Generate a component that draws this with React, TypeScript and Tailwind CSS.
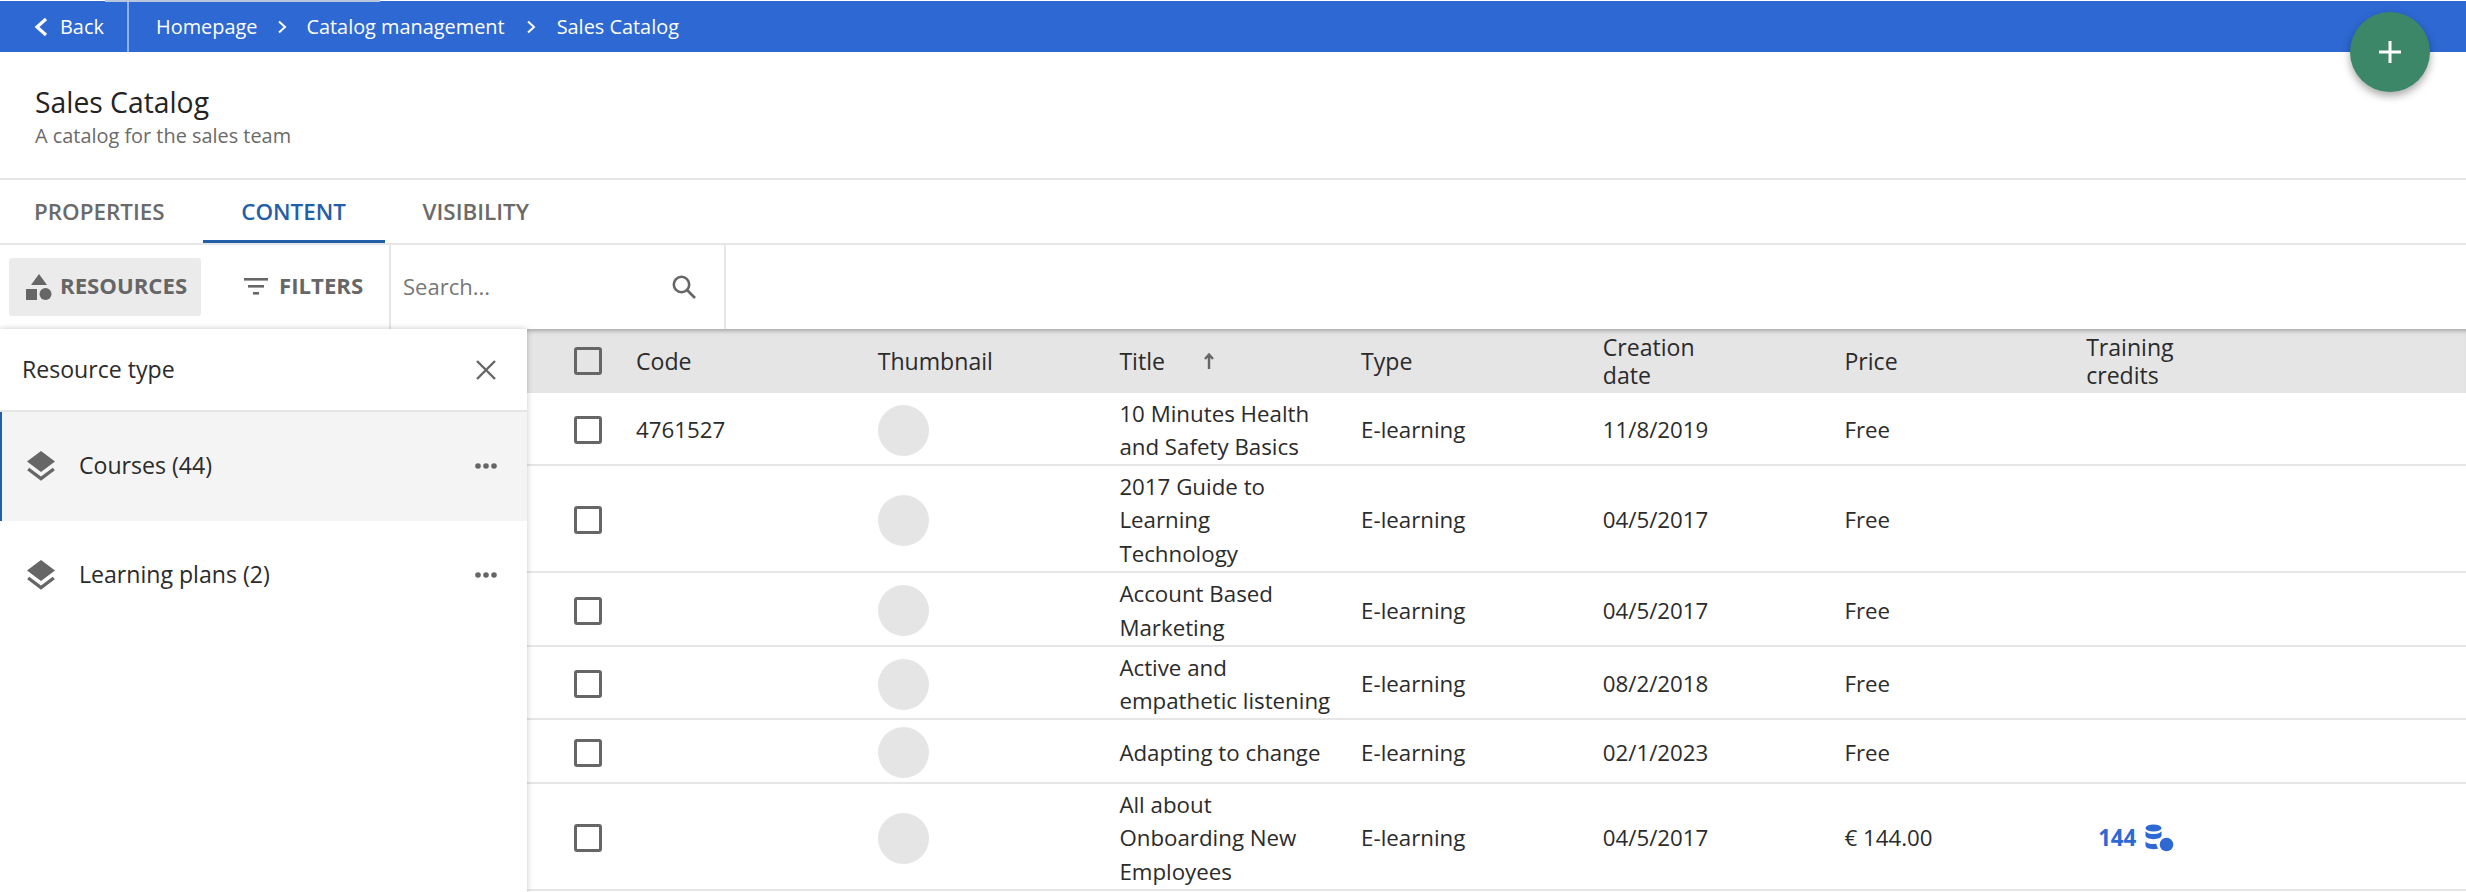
const rows = [
  { h: "h-[73px]", code: "4761527", title: "10 Minutes Health and Safety Basics", date: "11/8/2019", price: "Free" },
  { h: "h-[107px]", code: "", title: "2017 Guide to Learning Technology", date: "04/5/2017", price: "Free" },
  { h: "h-[74px]", code: "", title: "Account Based Marketing", date: "04/5/2017", price: "Free" },
  { h: "h-[73px]", code: "", title: "Active and empathetic listening", date: "08/2/2018", price: "Free" },
  { h: "h-[64px]", code: "", title: "Adapting to change", date: "02/1/2023", price: "Free" },
  { h: "h-[107px]", code: "", title: "All about Onboarding New Employees", date: "04/5/2017", price: "€ 144.00", credits: "144" },
];

const gridCols = "grid grid-cols-[109px_repeat(7,241.7px)_1fr] items-center";

function Checkbox() {
  return (
    <div className="ml-[47px] h-[28px] w-[28px] rounded-[3px] border-[3px] border-[#666666]" />
  );
}

function LayersIcon() {
  return (
    <svg width="28" height="30" viewBox="0 0 28 30" className="shrink-0">
      <path d="M14 0 28 10.5 14 21 0 10.5Z" fill="#666666" />
      <path d="M1.2 18 14 27.6 26.8 18" fill="none" stroke="#666666" strokeWidth="3.4" />
    </svg>
  );
}

function Dots() {
  return (
    <svg width="22" height="6" viewBox="0 0 22 6">
      <circle cx="3" cy="3" r="2.8" fill="#666666" />
      <circle cx="11" cy="3" r="2.8" fill="#666666" />
      <circle cx="19" cy="3" r="2.8" fill="#666666" />
    </svg>
  );
}

function CreditsIcon() {
  return (
    <svg width="29" height="29" viewBox="0 0 29 29" fill="#2d68d3">
      <ellipse cx="8.5" cy="4" rx="8" ry="3.6" />
      <path d="M.5 7.2c1.6 2 4.6 2.8 8 2.8s6.4-.8 8-2.8v4.4c0 2.2-3.6 3.6-8 3.6s-8-1.4-8-3.6Z" />
      <path d="M.5 17.4c1.6 1.8 4.6 2.6 8 2.6 1 0 1.9-.1 2.8-.2.2 1.8.9 3.4 2 4.7-1.4.5-3 .7-4.8.7-4.4 0-8-1.4-8-3.6Z" />
      <circle cx="21.5" cy="20.5" r="6.8" />
    </svg>
  );
}

export default function App() {
  return (
    <div className="relative h-[892px] w-[2466px] overflow-hidden bg-white pt-px font-['Open_Sans',sans-serif] text-[#2b2b2b]">
      {/* Breadcrumb bar */}
      <div className="flex h-[51px] items-center bg-[#2d68d3] text-[19.9px] font-medium text-white">
        <div className="flex h-full w-[129px] items-center border-r-2 border-[#8fb0e8] pl-[34px]">
          <svg width="14" height="20" viewBox="0 0 14 20" fill="none" stroke="white" strokeWidth="3.2" className="mr-[12px]">
            <path d="M12 2 3 10 12 18" />
          </svg>
          Back
        </div>
        <span className="ml-[27px]">Homepage</span>
        <svg width="10" height="14" viewBox="0 0 10 14" fill="none" stroke="white" strokeWidth="2" className="mx-[19.5px]">
          <path d="M2 1.5 8 7 2 12.5" />
        </svg>
        <span>Catalog management</span>
        <svg width="10" height="14" viewBox="0 0 10 14" fill="none" stroke="white" strokeWidth="2" className="mx-[21px]">
          <path d="M2 1.5 8 7 2 12.5" />
        </svg>
        <span>Sales Catalog</span>
      </div>
      <div className="absolute left-[105px] top-0 h-[2px] w-[275px] bg-[#b9c6dc]" />

      {/* Page title */}
      <div className="flex h-[128px] flex-col border-b-2 border-[#e6e6e6] px-[35px] pt-[30px]">
        <div className="text-[28.3px] font-medium leading-[40px] text-[#232323]">Sales Catalog</div>
        <div className="mt-[1px] text-[19.9px] leading-[26px] text-[#6a6a6a]">A catalog for the sales team</div>
      </div>

      {/* Tabs */}
      <div className="flex h-[65px] items-stretch border-b-2 border-[#e6e6e6] text-[22.4px] font-semibold text-[#6a6a6a]">
        <div className="ml-[34px] flex items-center">PROPERTIES</div>
        <div className="ml-[38px] flex w-[182px] items-center justify-center border-b-[3px] border-[#255ea8] pt-[3px] text-[#255ea8]">CONTENT</div>
        <div className="ml-[38px] flex items-center">VISIBILITY</div>
      </div>

      {/* Toolbar */}
      <div className="flex h-[84px] items-stretch">
        <div className="flex w-[389px] items-center pl-[9px] text-[22.2px] font-bold text-[#666666]">
          <div className="flex h-[58px] w-[192px] items-center rounded-[3px] bg-[#ebebeb] pl-[17px]">
            <svg width="26" height="26" viewBox="0 0 26 26" fill="#666666" className="mr-[8px]">
              <path d="M13 0 21 11H5Z" />
              <rect x="0" y="15" width="11" height="11" />
              <circle cx="19.5" cy="20" r="6" />
            </svg>
            <span className="pb-[2px]">RESOURCES</span>
          </div>
          <svg width="24" height="20" viewBox="0 0 24 20" fill="#666666" className="ml-[43px] mr-[11px]">
            <rect x="0" y="1" width="24" height="2.6" />
            <rect x="4" y="8" width="16" height="2.6" />
            <rect x="9" y="15" width="6" height="2.6" />
          </svg>
          <span className="pb-[2px]">FILTERS</span>
        </div>
        <div className="flex w-[337px] items-center justify-between border-x-2 border-[#e6e6e6] pl-[12px] pr-[28px] text-[22px] text-[#777777]">
          <span className="pb-[2px]">Search...</span>
          <svg width="24" height="24" viewBox="0 0 24 24" fill="none" stroke="#666666" strokeWidth="2.6">
            <circle cx="9.5" cy="9.5" r="7.7" />
            <path d="M15 15 23 23" />
          </svg>
        </div>
      </div>

      {/* Content area */}
      <div className="flex items-stretch">
        <div className="z-10 h-[563px] w-[527px] shrink-0 bg-white shadow-[0_0_6px_rgba(0,0,0,0.22)]">
          <div className="flex h-[83px] items-center justify-between border-b-2 border-[#e6e6e6] pl-[22px] pr-[30px] text-[23.1px] font-medium">
            Resource type
            <svg width="22" height="22" viewBox="0 0 22 22" fill="none" stroke="#666666" strokeWidth="2.4">
              <path d="M2 2 20 20M20 2 2 20" />
            </svg>
          </div>
          <div className="flex h-[109px] items-center border-l-[2px] border-[#255ea8] bg-[#f4f4f4] pb-[2px] pl-[25px] pr-[30px] text-[23.1px] font-medium">
            <LayersIcon />
            <span className="ml-[24px] flex-1">Courses (44)</span>
            <Dots />
          </div>
          <div className="flex h-[109px] items-center pb-[2px] pl-[27px] pr-[30px] text-[23.1px] font-medium">
            <LayersIcon />
            <span className="ml-[24px] flex-1">Learning plans (2)</span>
            <Dots />
          </div>
        </div>

        <div className="min-w-0 flex-1 text-[22.3px]">
          <div className={`${gridCols} h-[64px] bg-[#e5e5e5] text-[23.1px] font-medium leading-[28px] shadow-[inset_0_5px_4px_-3px_rgba(0,0,0,0.28)]`}>
            <Checkbox />
            <div>Code</div>
            <div>Thumbnail</div>
            <div className="flex items-center">
              Title
              <svg width="12" height="16" viewBox="0 0 12 16" fill="none" stroke="#666666" strokeWidth="2.4" className="ml-[38px]">
                <path d="M6 16V2M2 6 6 1.5 10 6" />
              </svg>
            </div>
            <div>Type</div>
            <div className="w-[110px]">Creation date</div>
            <div>Price</div>
            <div className="w-[110px]">Training credits</div>
            <div />
          </div>
          {rows.map((row) => (
            <div key={row.title} className={`${gridCols} ${row.h} border-b-2 border-[#e6e6e6] pt-[3px] leading-[33.5px]`}>
              <Checkbox />
              <div>{row.code}</div>
              <div className="h-[51px] w-[51px] rounded-full bg-[#e5e5e5]" />
              <div className="w-[213px]">{row.title}</div>
              <div>E-learning</div>
              <div>{row.date}</div>
              <div>{row.price}</div>
              <div className="flex items-center pl-[12px]">
                {row.credits && (
                  <>
                    <span className="mr-[9px] font-bold text-[#2d68d3]">{row.credits}</span>
                    <CreditsIcon />
                  </>
                )}
              </div>
              <div />
            </div>
          ))}
        </div>
      </div>

      {/* Add button */}
      <div className="absolute left-[2350px] top-[12px] flex h-[80px] w-[80px] items-center justify-center rounded-full bg-[#3d8769] shadow-[0_4px_8px_rgba(0,0,0,0.35)]">
        <svg width="22" height="22" viewBox="0 0 22 22" fill="white">
          <rect x="9.5" y="0" width="3" height="22" />
          <rect x="0" y="9.5" width="22" height="3" />
        </svg>
      </div>
    </div>
  );
}
